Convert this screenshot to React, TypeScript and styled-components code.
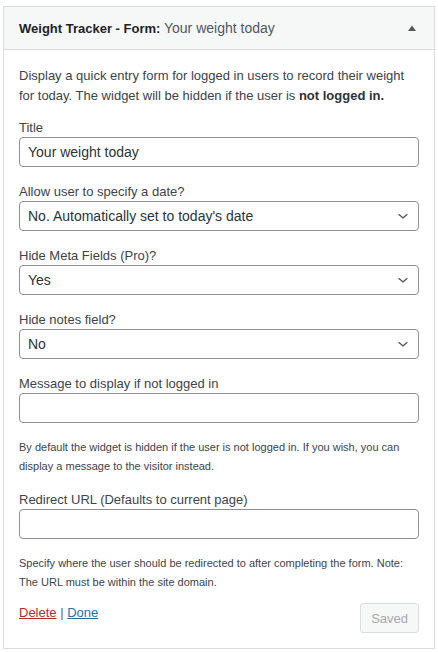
import React from "react";
import styled, { createGlobalStyle } from "styled-components";

const Global = createGlobalStyle`
  html, body { margin: 0; padding: 0; background: #ffffff; }
  body { font-family: "Liberation Sans", Arial, sans-serif; color: #3c434a; }
  * { box-sizing: border-box; }
`;

const Page = styled.div`
  padding: 6px 3px 0 3px;
`;

const Card = styled.div`
  border: 1px solid #dcdcde;
  background: #fff;
`;

const Header = styled.div`
  display: flex;
  align-items: center;
  justify-content: space-between;
  height: 43px;
  padding: 0 16px 0 15px;
  background: #f6f7f7;
  border-bottom: 1px solid #dcdcde;
`;

const HeaderTitle = styled.h3`
  margin: 0;
  font-size: 13px;
  font-weight: 600;
  color: #1d2327;
  white-space: nowrap;
`;

const HeaderSub = styled.span`
  font-size: 14px;
  font-weight: 400;
  color: #50575e;
`;

const Toggle = styled.span`
  display: flex;
  align-items: center;
  justify-content: center;
  width: 12px;
  height: 12px;
`;

const Body = styled.div`
  padding: 16px 15px 15px;
  font-size: 13px;
`;

const Intro = styled.p`
  margin: 0 0 12px;
  line-height: 20px;
  font-size: 13px;
  color: #3c434a;
`;

const Strong = styled.strong`
  font-weight: 600;
  color: #2c3338;
`;

const Field = styled.div<{ $gap?: number }>`
  display: flex;
  flex-direction: column;
  margin-bottom: ${(p) => (p.$gap ?? 15)}px;
`;

const Label = styled.label`
  display: block;
  line-height: 19px;
  font-size: 13px;
  color: #3c434a;
`;

const TextInput = styled.input`
  width: 100%;
  height: 30px;
  margin: 0;
  padding: 0 8px;
  border: 1px solid #8c8f94;
  border-radius: 4px;
  background: #fff;
  font-family: inherit;
  font-size: 14px;
  color: #2c3338;
  outline: none;
`;

const SelectWrap = styled.div`
  position: relative;
  width: 100%;
`;

const Select = styled.select`
  appearance: none;
  -webkit-appearance: none;
  width: 100%;
  height: 30px;
  margin: 0;
  padding: 0 24px 0 8px;
  border: 1px solid #8c8f94;
  border-radius: 4px;
  background: #fff;
  font-family: inherit;
  font-size: 14px;
  color: #2c3338;
  outline: none;
`;

const Chevron = styled.svg`
  position: absolute;
  right: 8px;
  top: 7px;
  width: 16px;
  height: 16px;
  pointer-events: none;
`;

const Help = styled.p<{ $after?: number }>`
  margin: 0 0 ${(p) => p.$after ?? 0}px;
  font-size: 11px;
  line-height: 19px;
  color: #3c434a;
`;

const Footer = styled.div`
  display: flex;
  justify-content: space-between;
  align-items: flex-start;
  margin-top: 11px;
`;

const Links = styled.div`
  line-height: 19px;
  font-size: 13px;
  color: #646970;
`;

const LinkA = styled.a<{ $danger?: boolean }>`
  color: ${(p) => (p.$danger ? "#b32d2e" : "#2271b1")};
  text-decoration: underline;
  cursor: pointer;
`;

const SavedButton = styled.button`
  height: 30px;
  padding: 0 10px;
  border: 1px solid #dcdcde;
  border-radius: 3px;
  background: #f6f7f7;
  color: #a7aaad;
  font-family: inherit;
  font-size: 13px;
  cursor: default;
`;

const ChevronIcon = () => (
  <Chevron viewBox="0 0 16 16" fill="none">
    <path d="M4 6.5l4 3.5 4-3.5" stroke="#50575e" strokeWidth="1.3" strokeLinecap="round" strokeLinejoin="round" />
  </Chevron>
);

const SelectField = ({ label, value, gap }: { label: string; value: string; gap?: number }) => (
  <Field $gap={gap}>
    <Label>{label}</Label>
    <SelectWrap>
      <Select defaultValue={value}>
        <option value={value}>{value}</option>
      </Select>
      <ChevronIcon />
    </SelectWrap>
  </Field>
);

export default function App() {
  return (
    <>
      <Global />
      <Page>
        <Card>
          <Header>
            <HeaderTitle>
              Weight Tracker - Form: <HeaderSub>Your weight today</HeaderSub>
            </HeaderTitle>
            <Toggle>
              <svg width="10" height="8" viewBox="0 0 10 8">
                <path d="M1 7L5 1.5 9 7z" fill="#50575e" />
              </svg>
            </Toggle>
          </Header>
          <Body>
            <Intro>
              Display a quick entry form for logged in users to record their weight for today. The widget will be
              hidden if the user is <Strong>not logged in.</Strong>
            </Intro>
            <Field>
              <Label>Title</Label>
              <TextInput defaultValue="Your weight today" />
            </Field>
            <SelectField label="Allow user to specify a date?" value="No. Automatically set to today's date" />
            <SelectField label="Hide Meta Fields (Pro)?" value="Yes" />
            <SelectField label="Hide notes field?" value="No" />
            <Field>
              <Label>Message to display if not logged in</Label>
              <TextInput defaultValue="" />
            </Field>
            <Help $after={14}>
              By default the widget is hidden if the user is not logged in. If you wish, you can display a message to
              the visitor instead.
            </Help>
            <Field>
              <Label>Redirect URL (Defaults to current page)</Label>
              <TextInput defaultValue="" />
            </Field>
            <Help>
              Specify where the user should be redirected to after completing the form. Note: The URL must be within
              the site domain.
            </Help>
            <Footer>
              <Links>
                <LinkA $danger>Delete</LinkA> | <LinkA>Done</LinkA>
              </Links>
              <SavedButton disabled>Saved</SavedButton>
            </Footer>
          </Body>
        </Card>
      </Page>
    </>
  );
}
